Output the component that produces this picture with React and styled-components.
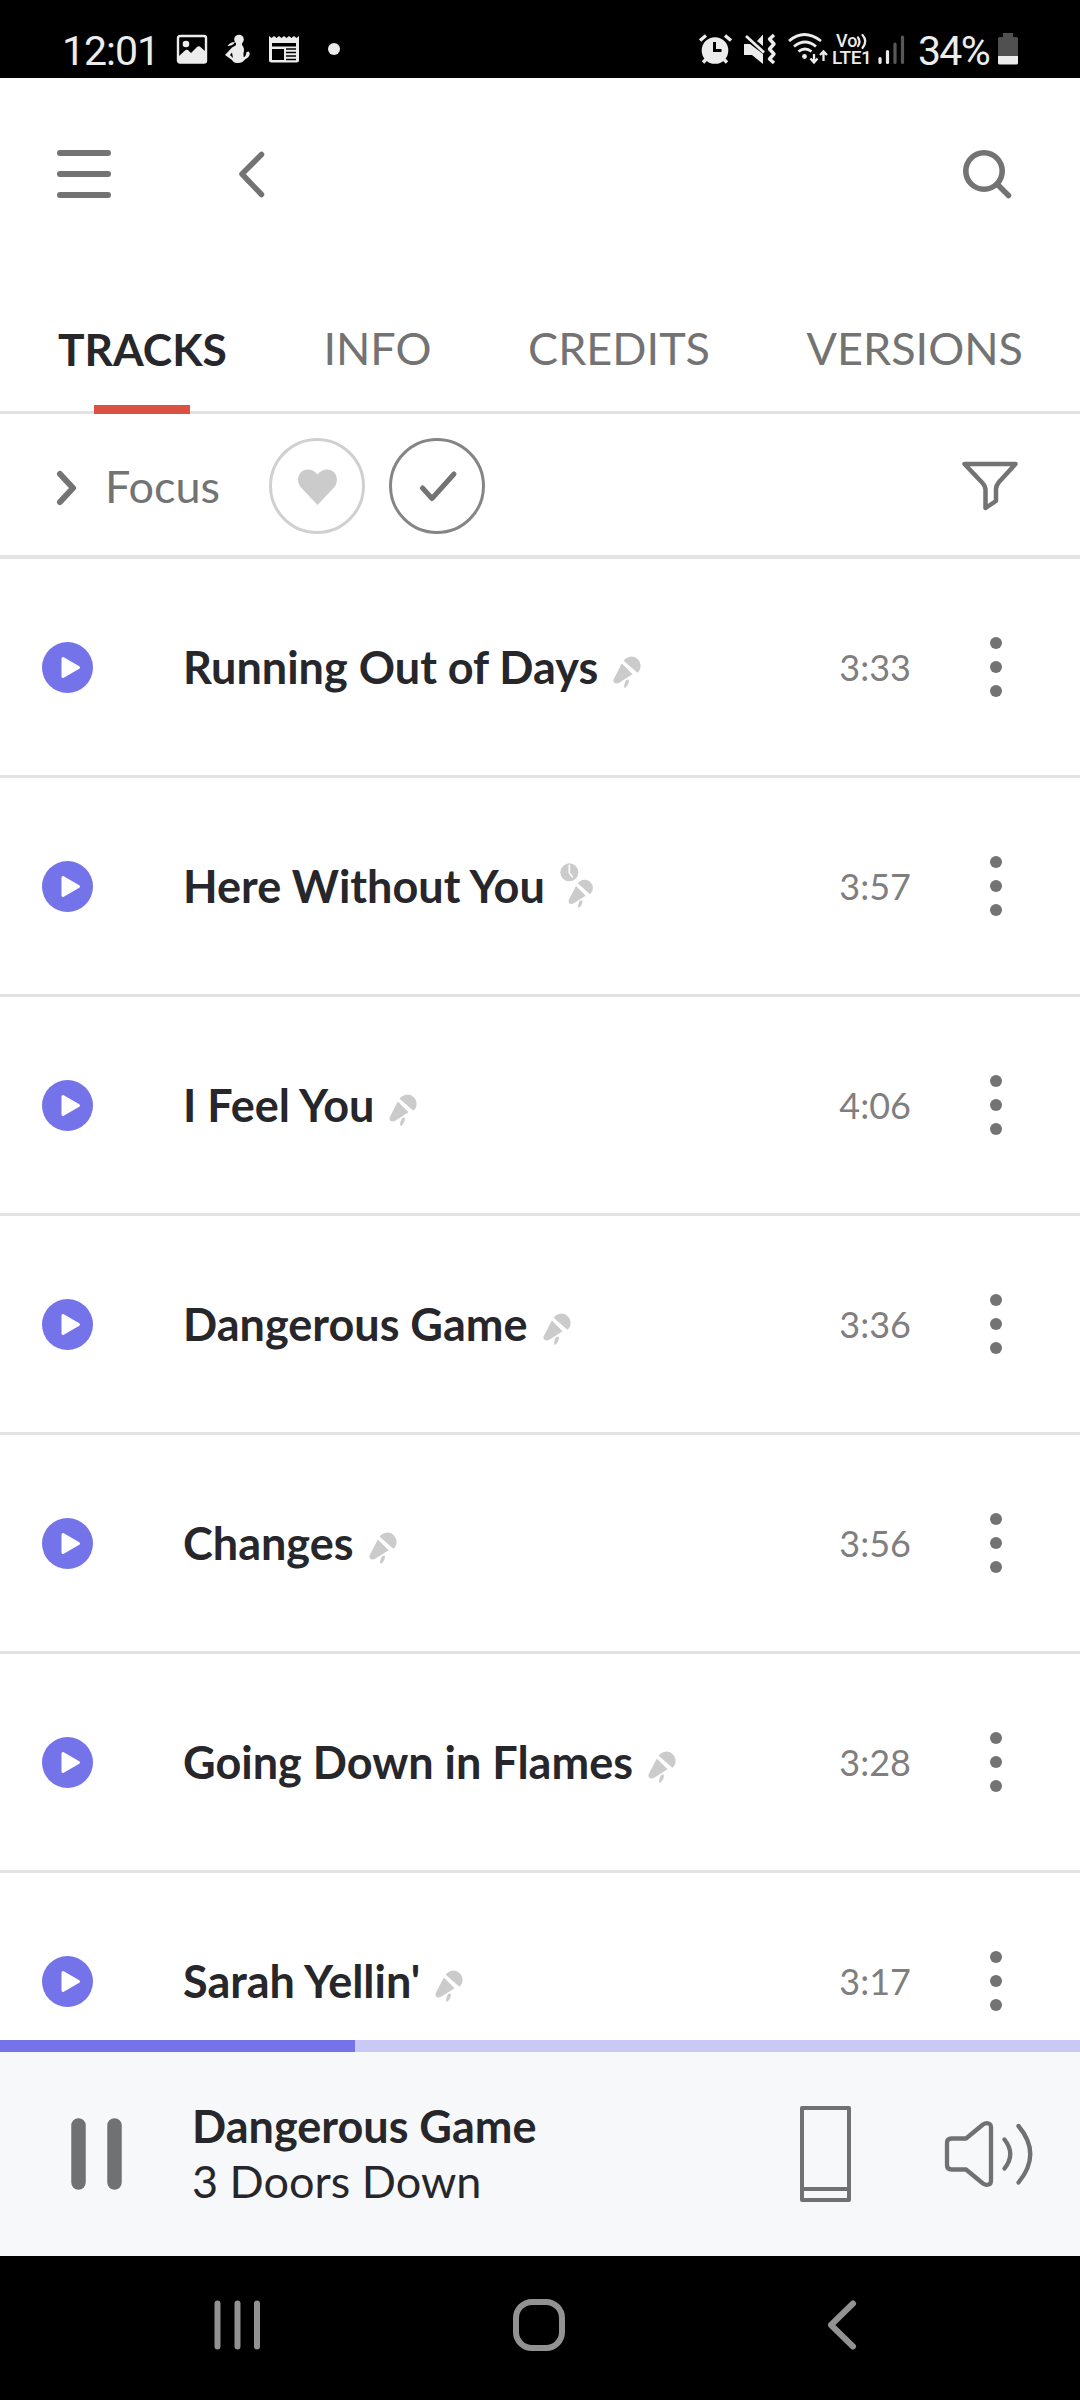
import React from 'react';
import styled, { createGlobalStyle } from 'styled-components';

const GlobalStyle = createGlobalStyle`
  * {
    box-sizing: border-box;
  }

  body {
    margin: 0;
    background: #ffffff;
    font-family: Lato, sans-serif;
  }
`;

const Screen = styled.div`
  display: flex;
  flex-direction: column;
  width: 1080px;
  height: 2400px;
  overflow: hidden;
  background: #ffffff;
`;

const Icon = styled.svg`
  display: block;
  flex-shrink: 0;
  overflow: visible;
  fill: none;
  stroke-linecap: round;
  stroke-linejoin: round;
`;

const StatusBar = styled.div`
  display: flex;
  justify-content: space-between;
  height: 78px;
  padding: 33px 62px 0 62px;
  background: #000000;
  color: #ececec;
`;

const StatusGroup = styled.div`
  display: flex;
  align-items: flex-start;
  height: 32px;
`;

const StatusText = styled.span`
  width: ${({ $width }) => $width}px;
  margin-top: -6px;
  margin-left: ${({ $gap }) => $gap || 0}px;
  font-family: Roboto, sans-serif;
  font-size: 41px;
  line-height: 48px;
  letter-spacing: ${({ $spacing }) => $spacing}px;
  white-space: nowrap;
`;

const StatusIcon = styled(Icon)`
  margin-left: ${({ $gap }) => $gap}px;
`;

const Volte = styled.div`
  display: flex;
  flex-direction: column;
  width: 40px;
  margin-left: 4px;
  font-family: Roboto, sans-serif;
  font-weight: 500;
`;

const VolteTop = styled.div`
  display: flex;
  height: 16px;
  padding-left: 4px;
  font-size: 18px;
  line-height: 16px;
`;

const VolteBottom = styled.div`
  font-size: 19px;
  line-height: 18px;
  letter-spacing: -0.4px;
`;

const Header = styled.header`
  display: flex;
  align-items: center;
  height: 192px;
  padding: 0 69px 0 57px;
  color: #737373;
`;

const BackIcon = styled(Icon)`
  margin-left: 127px;
  margin-right: auto;
`;

const Tabs = styled.nav`
  display: flex;
  justify-content: space-between;
  height: 144px;
  padding: 0 57px 0 58px;
  border-bottom: 3px solid #e3e3e3;
`;

const Tab = styled.div`
  display: flex;
  flex-direction: column;
  align-items: center;
  justify-content: space-between;
  height: 144px;
  padding-top: ${({ $active }) => ($active ? 52 : 51)}px;
  font-size: ${({ $active }) => ($active ? 44.3 : 45)}px;
  line-height: 54px;
  font-weight: ${({ $active }) => ($active ? 700 : 400)};
  color: ${({ $active }) => ($active ? '#27272b' : '#737373')};

  &::after {
    content: '';
    width: 96px;
    height: 9px;
    background: ${({ $active }) => ($active ? '#dd5044' : 'transparent')};
  }
`;

const FocusBar = styled.div`
  display: flex;
  align-items: center;
  height: 145px;
  padding: 0 62px 0 57px;
  border-bottom: 4px solid #e3e3e3;
  color: #737373;
`;

const FocusChevron = styled(Icon)`
  margin-top: 6px;
`;

const FocusLabel = styled.div`
  width: 164px;
  margin: 2px 0 0 28px;
  font-size: 45px;
  line-height: 54px;
`;

const FocusButton = styled.div`
  display: flex;
  align-items: center;
  justify-content: center;
  width: 96px;
  height: 96px;
  margin: 3px 24px 0 0;
  border: 3px solid ${({ $checked }) => ($checked ? '#858585' : '#d0d0d0')};
  border-radius: 50%;
`;

const FilterIcon = styled(Icon)`
  margin-top: 3px;
  margin-left: auto;
`;

const TrackList = styled.main`
  height: 1481px;
  overflow: hidden;
`;

const TrackRow = styled.div`
  display: flex;
  align-items: center;
  height: 219px;
  padding: 0 78px 0 42px;
  border-bottom: 3px solid #e3e3e3;
`;

const TrackTitle = styled.div`
  margin-left: 90px;
  font-size: 45px;
  line-height: 54px;
  font-weight: 700;
  color: #27272b;
  white-space: nowrap;
`;

const MicIcon = styled(Icon)`
  margin: 7px 0 0 14px;
`;

const TimedMicIcon = styled(Icon)`
  margin: 0 0 2px 15px;
`;

const Duration = styled.div`
  margin-left: auto;
  margin-right: 79px;
  font-size: 36px;
  line-height: 54px;
  color: #7f7f7f;
`;

const Progress = styled.div`
  height: 12px;
  background: #cac8f4;
`;

const ProgressFill = styled.div`
  height: 100%;
  background: #7573ea;
`;

const Player = styled.footer`
  display: flex;
  align-items: center;
  height: 204px;
  padding: 0 47px 0 71px;
  background: #f7f8fa;
  color: #707173;
`;

const NowPlaying = styled.div`
  margin-left: 69px;
  margin-right: auto;
  font-size: 45px;
  line-height: 55px;
  color: #27272b;
`;

const NowTitle = styled.div`
  font-weight: 700;
`;

const SpeakerIcon = styled(Icon)`
  margin-left: 94px;
`;

const NavBar = styled.div`
  display: flex;
  align-items: center;
  height: 144px;
  padding: 0 223px 6px 214px;
  background: #000000;
  color: #929292;
`;

const HomeIcon = styled(Icon)`
  margin: 0 262px 0 252px;
`;

const tracks = [
  { title: 'Running Out of Days', time: '3:33' },
  { title: 'Here Without You', time: '3:57', timed: true },
  { title: 'I Feel You', time: '4:06' },
  { title: 'Dangerous Game', time: '3:36' },
  { title: 'Changes', time: '3:56' },
  { title: 'Going Down in Flames', time: '3:28' },
  { title: "Sarah Yellin'", time: '3:17' },
];

const tabs = ['TRACKS', 'INFO', 'CREDITS', 'VERSIONS'];

const progress = 32.87;

const MicShape = () => (
  <g fill="#cbcbcb">
    <path d="M119 127 A25 25 0 1 1 156 160 Z" />
    <path d="M114 135 L143 164 L107 187 Q98 191 93 186 Q89 181 94 173 Z" />
    <path d="M125 180 Q133 175 133 181 Q134 191 124 200 Q118 202 121 190 Z" />
  </g>
);

const Mic = () => (
  <MicIcon width="30" height="34" viewBox="88 109 80 92">
    <MicShape />
  </MicIcon>
);

const TimedMic = () => (
  <TimedMicIcon width="34" height="45" viewBox="66 66 102 135">
    <circle cx="94" cy="94" r="27" fill="#cbcbcb" />
    <path d="M94 73 V96 L103 107" stroke="#ffffff" strokeWidth="5" />
    <MicShape />
  </TimedMicIcon>
);

const Play = () => (
  <Icon width="51" height="51" viewBox="0 0 51 51">
    <circle cx="25.5" cy="25.5" r="25.5" fill="#7573ea" />
    <path d="M21 16.500 L36.500 25.500 L21 34.500 Z" fill="#ffffff" stroke="#ffffff" strokeWidth="3" />
  </Icon>
);

const Dots = () => (
  <Icon width="12" height="60" viewBox="0 0 12 60">
    <g fill="#737373">
      <circle cx="6" cy="6" r="6" />
      <circle cx="6" cy="30" r="6" />
      <circle cx="6" cy="54" r="6" />
    </g>
  </Icon>
);

const Status = () => (
  <StatusBar>
    <StatusGroup>
      <StatusText $width={115} $spacing={-1}>
        12:01
      </StatusText>
      <StatusIcon $gap={0} width="30" height="32" viewBox="0 0 30 32">
        <rect x="1" y="3" width="28" height="26.5" rx="2" stroke="#ececec" strokeWidth="2.4" />
        <circle cx="9" cy="11" r="3.3" fill="#ececec" />
        <path d="M1 24 L8 17.5 Q10 16 12 18 L14 20 L20 14 Q22 12.500 24 14.500 L29 19 V29 H1 Z" fill="#ececec" />
      </StatusIcon>
      <StatusIcon $gap={18} width="26" height="32" viewBox="0 0 26 32">
        <g fill="#ececec">
          <circle cx="14" cy="6.500" r="4.800" />
          <path d="M2.500 13 Q5 9 10 9 Q8 13 2.500 13 Z" />
          <path d="M11 9 H17 V12 Q20 15 18.500 20 L18.500 24 Q21 24 21.500 19 L24 18.500 Q26.500 23 20 26.500 Q17 30.500 12 30 Q8.500 30 7 27 L0 22 L7 14.500 Q9 13.500 11 12 Z M7 19.500 L5 22 L8 25 Z" fillRule="evenodd" />
        </g>
      </StatusIcon>
      <StatusIcon $gap={18} width="30" height="32" viewBox="0 0 30 32">
        <path
          d="M0 3 L2.500 5 L5 3 L7.500 5 L10 3 L12.500 5 L15 3 L17.500 5 L20 3 L22.500 5 L25 3 L27.500 5 L30 3 V27 Q30 29.500 27.500 29.500 H2.500 Q0 29.500 0 27 Z M3 10 H27 V13.500 H3 Z M3 16 H15 V27 H3 Z"
          fill="#ececec"
          fillRule="evenodd"
        />
        <path d="M17 16 H27 M17 19.500 H27 M17 23 H27 M17 26.500 H27" stroke="#000000" strokeWidth="1.300" strokeLinecap="butt" />
      </StatusIcon>
      <StatusIcon $gap={29} width="12" height="32" viewBox="0 0 12 32">
        <circle cx="6" cy="16" r="6" fill="#ececec" />
      </StatusIcon>
    </StatusGroup>
    <StatusGroup>
      <StatusIcon $gap={0} width="33" height="32" viewBox="0 0 33 32">
        <circle cx="15" cy="17.500" r="13.300" fill="#ececec" />
        <path d="M0 7.500 L6 2.500 M25 2.500 L31 7.500 M3 29.500 L7 25.500 M27 29.500 L23 25.500" stroke="#ececec" strokeWidth="3.400" strokeLinecap="butt" />
        <path d="M14.500 9 V17.500 H21.500" stroke="#000000" strokeWidth="3" strokeLinecap="butt" strokeLinejoin="miter" />
      </StatusIcon>
      <StatusIcon $gap={11} width="33" height="32" viewBox="0 0 33 32">
        <path d="M0 11 H6 L19 21 V31 L8 22 H0 Z M13 8 L19 1.500 V13 Z M6 11 L19 22 V31 Z" fill="#ececec" />
        <path d="M2 3 L20 19.500" stroke="#ececec" strokeWidth="2.800" strokeLinecap="butt" />
        <path d="M30 2 L25.500 6 L30 11 L25.500 16 L30 21 L25.500 26 L30 30" stroke="#ececec" strokeWidth="3.400" strokeLinecap="butt" />
      </StatusIcon>
      <StatusIcon $gap={10} width="41" height="32" viewBox="0 0 41 32">
        <path d="M2 8 Q17 -5 34 8 M7 13.500 Q18 4.500 29 13.500 M11.500 18.500 Q18 13.500 24.500 18.500" stroke="#ececec" strokeWidth="2.800" strokeLinecap="butt" />
        <circle cx="17.500" cy="23.500" r="2.400" fill="#ececec" />
        <path d="M27 21 V29 M23.500 25.500 L27 29.500 L30.500 25.500 M36.500 28 V19 M33 22 L36.500 18.500 L40 22" stroke="#ececec" strokeWidth="2.300" strokeLinecap="butt" strokeLinejoin="miter" />
      </StatusIcon>
      <Volte>
        <VolteTop>
          Vo
          <Icon width="10" height="16" viewBox="0 0 10 16">
            <path d="M1 4.500 Q4 8.500 1 13 M5.500 2 Q11 8 5.500 15" stroke="#ececec" strokeWidth="2.200" />
          </Icon>
        </VolteTop>
        <VolteBottom>LTE1</VolteBottom>
      </Volte>
      <StatusIcon $gap={6} width="28" height="32" viewBox="0 0 28 32">
        <path d="M2 25.500 V29.500 M9.500 18.500 V29.500" stroke="#ececec" strokeWidth="3.200" />
        <path d="M17 11 V29.500 M24.500 4 V29.500" stroke="#585858" strokeWidth="3.200" />
      </StatusIcon>
      <StatusText $gap={12} $width={80} $spacing={-1.7}>
        34%
      </StatusText>
      <StatusIcon $gap={0} width="20" height="32" viewBox="0 0 20 32">
        <path d="M5 0 H15 V4 H18.500 Q20 4 20 6 V23 H0 V6 Q0 4 1.500 4 H5 Z" fill="#505050" />
        <path d="M0 23 H20 V30 Q20 31.500 18.500 31.500 H1.500 Q0 31.500 0 30 Z" fill="#ececec" />
      </StatusIcon>
    </StatusGroup>
  </StatusBar>
);

const App = () => (
  <>
    <GlobalStyle />
    <Screen>
      <Status />
      <Header>
        <Icon width="54" height="48" viewBox="0 0 54 48">
          <path d="M3 3 H51 M3 24 H51 M3 45 H51" stroke="currentColor" strokeWidth="6" />
        </Icon>
        <BackIcon width="26" height="48" viewBox="0 0 26 48">
          <path d="M23.500 4.500 L4 24 L23.500 44.500" stroke="currentColor" strokeWidth="5.500" />
        </BackIcon>
        <Icon width="48" height="48" viewBox="0 0 48 48">
          <circle cx="21" cy="21" r="18.200" stroke="currentColor" strokeWidth="5.600" />
          <path d="M34.500 34.500 L45.500 45.500" stroke="currentColor" strokeWidth="5.500" />
        </Icon>
      </Header>
      <Tabs>
        {tabs.map((tab, i) => (
          <Tab key={tab} $active={i === 0}>
            {tab}
          </Tab>
        ))}
      </Tabs>
      <FocusBar>
        <FocusChevron width="20" height="34" viewBox="0 0 20 34">
          <path d="M3 3 L16 17 L3 31" stroke="currentColor" strokeWidth="6" />
        </FocusChevron>
        <FocusLabel>Focus</FocusLabel>
        <FocusButton>
          <Icon width="39" height="36" viewBox="0 0 39 36">
            <path d="M19.500 37 L3 19.500 C-1 15 -1 8 3.500 3.800 C8 0 15 0.500 19.500 6.500 C24 0.500 31 0 35.500 3.800 C40 8 40 15 36 19.500 Z" fill="#cbcbcb" />
          </Icon>
        </FocusButton>
        <FocusButton $checked>
          <Icon width="38" height="32" viewBox="0 0 38 32">
            <path d="M4.500 18 L14 28.500 L36 4" stroke="currentColor" strokeWidth="5" />
          </Icon>
        </FocusButton>
        <FilterIcon width="56" height="48" viewBox="0 0 56 48">
          <path d="M2.500 2 H53.500 L37 20 Q34 23.500 34 27 V39 L23.500 46 V28 Q23.500 24 20.500 21 Z" stroke="currentColor" strokeWidth="4.500" />
        </FilterIcon>
      </FocusBar>
      <TrackList>
        {tracks.map(({ title, time, timed }) => (
          <TrackRow key={title}>
            <Play />
            <TrackTitle>{title}</TrackTitle>
            {timed ? <TimedMic /> : <Mic />}
            <Duration>{time}</Duration>
            <Dots />
          </TrackRow>
        ))}
      </TrackList>
      <Progress>
        <ProgressFill style={{ width: `${progress}%` }} />
      </Progress>
      <Player>
        <Icon width="52" height="72" viewBox="0 0 52 72">
          <path d="M7.500 7.500 V64.500 M43.500 7.500 V64.500" stroke="currentColor" strokeWidth="14.500" />
        </Icon>
        <NowPlaying>
          <NowTitle>Dangerous Game</NowTitle>
          <div>3 Doors Down</div>
        </NowPlaying>
        <Icon width="51" height="96" viewBox="0 0 51 96">
          <path d="M2 2 H49 V94 H2 Z M2 83 H49" stroke="currentColor" strokeWidth="4" />
        </Icon>
        <SpeakerIcon width="88" height="66" viewBox="0 0 88 66">
          <path
            d="M6.500 17.500 H21 L38 3.500 Q41 1.500 43.500 2.500 Q46 3 46 6.500 V59.500 Q46 63 43.500 63.500 Q41 64.500 38 62.500 L21 48.500 H6.500 Q2 48.500 2 44 V22 Q2 17.500 6.500 17.500 Z M59.500 18.500 Q71 33 59.500 47.500 M73.500 5 Q97 33 73.500 61.500"
            stroke="currentColor"
            strokeWidth="4.300"
          />
        </SpeakerIcon>
      </Player>
      <NavBar>
        <Icon width="47" height="50" viewBox="0 0 47 50">
          <path d="M3.500 3.500 V46.500 M23.500 3.500 V46.500 M43 3.500 V46.500" stroke="currentColor" strokeWidth="6" />
        </Icon>
        <HomeIcon width="52" height="52" viewBox="0 0 52 52">
          <rect x="3" y="3" width="46" height="46" rx="16" stroke="currentColor" strokeWidth="6" />
        </HomeIcon>
        <Icon width="30" height="50" viewBox="0 0 30 50">
          <path d="M26 3.500 L4 25 L26 46.500" stroke="currentColor" strokeWidth="6" />
        </Icon>
      </NavBar>
    </Screen>
  </>
);

export default App;
